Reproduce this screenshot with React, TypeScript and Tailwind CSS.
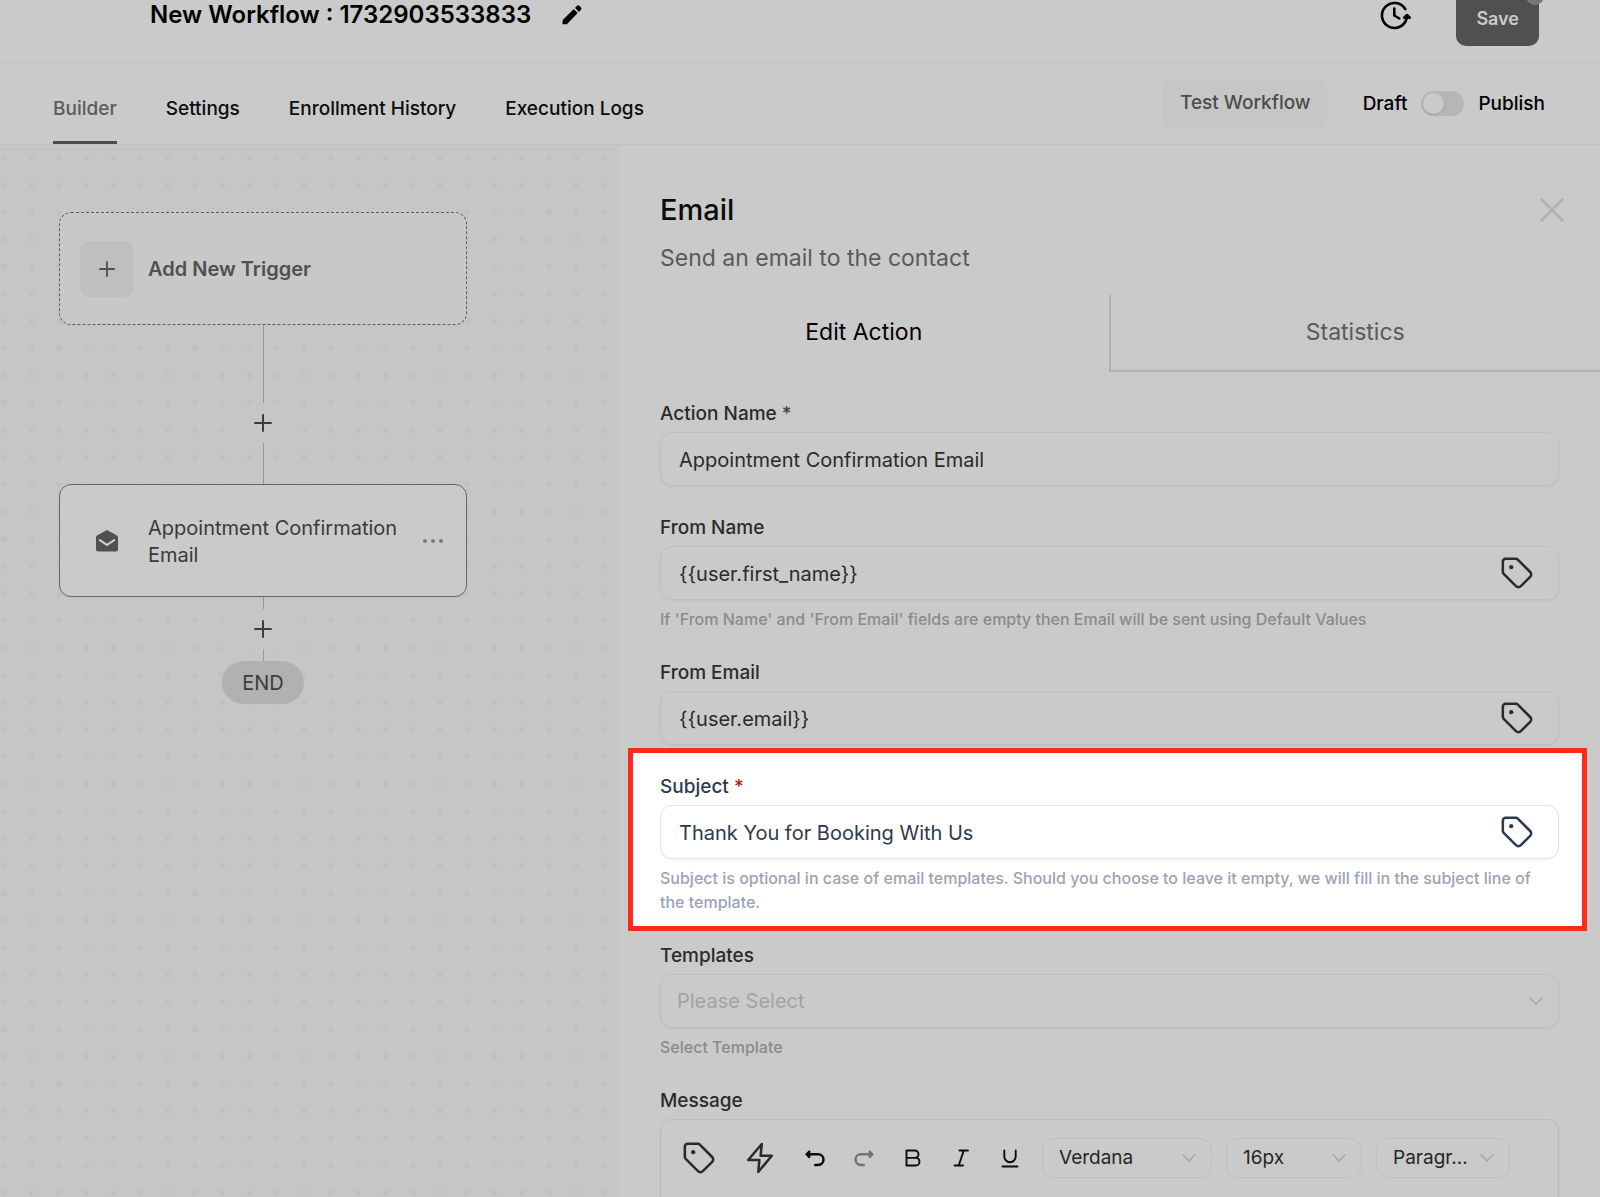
import type { ReactNode } from "react";

function TagIcon({ className = "" }: { className?: string }) {
  return (
    <svg viewBox="0 0 24 24" className={`size-[34px] ${className}`} fill="none" stroke="currentColor" strokeWidth="1.8" strokeLinejoin="round" aria-hidden="true">
      <path d="M12.586 2.586A2 2 0 0 0 11.172 2H4a2 2 0 0 0-2 2v7.172a2 2 0 0 0 .586 1.414l8.704 8.704a2.426 2.426 0 0 0 3.42 0l6.58-6.58a2.426 2.426 0 0 0 0-3.42z" />
      <circle cx="7.9" cy="7.9" r="1.5" fill="currentColor" stroke="none" />
    </svg>
  );
}

function Chevron({ className = "" }: { className?: string }) {
  return (
    <svg viewBox="0 0 14 8" className={`pointer-events-none h-2 w-3.5 text-[#a6a6a6] ${className}`} fill="none" stroke="currentColor" strokeWidth="1.4" strokeLinecap="round" aria-hidden="true">
      <path d="M1 0.8 7 7l6-6.2" />
    </svg>
  );
}

function PlusIcon({ className = "" }: { className?: string }) {
  return (
    <svg viewBox="0 0 18 18" className={className} fill="none" stroke="currentColor" strokeWidth="2" strokeLinecap="round" aria-hidden="true">
      <path d="M9 1v16M1 9h16" />
    </svg>
  );
}

function Field({ id, label, required, help, highlight, children }: { id: string; label: string; required?: boolean; help?: string; highlight?: boolean; children: ReactNode }) {
  return (
    <div className="relative">
      {highlight && <div className="absolute -top-6 -right-7 -bottom-[17px] -left-8 border-5 border-[#ff2a1c] bg-white" />}
      <div className="relative">
        <label htmlFor={id} className={`mb-[3px] block text-[19px] leading-[30px] font-medium ${highlight ? "text-[#2c3a52]" : "text-[#2b2b2b]"}`}>
          {label}
          {required && <span className={highlight ? "text-[#b91c1c]" : "text-[#444444]"}> *</span>}
        </label>
        {children}
        {help && <p className={`mt-[7px] text-base leading-6 font-medium ${highlight ? "text-[#9aa3b5]" : "text-[#8a8a8a]"}`}>{help}</p>}
      </div>
    </div>
  );
}

function TextField({ id, value, tag, highlight }: { id: string; value: string; tag?: boolean; highlight?: boolean }) {
  return (
    <div className={`flex h-[54px] items-center rounded-xl border pr-6 shadow-xs ${highlight ? "border-[#e3e4e8] bg-white text-[#2c3a52]" : "border-[#bfbfbf] text-[#2b2b2b]"}`}>
      <input id={id} type="text" defaultValue={value} className="h-full min-w-0 flex-1 bg-transparent pt-0.5 pl-[18px] text-xl outline-none" />
      {tag && (
        <button type="button" aria-label="Insert custom value">
          <TagIcon />
        </button>
      )}
    </div>
  );
}

function ToolSelect({ label, value, className }: { label: string; value: string; className: string }) {
  return (
    <div className={`relative flex h-10 items-center ${className}`}>
      <select aria-label={label} className="h-full w-full appearance-none rounded-xl border border-[#bfbfbf] bg-transparent pr-9 pl-4 text-[19px] text-[#262626]">
        <option>{value}</option>
      </select>
      <Chevron className="absolute right-4" />
    </div>
  );
}

function Connector({ className }: { className: string }) {
  return <div className={`w-px bg-[#979797] ${className}`} />;
}

function AddStep() {
  return (
    <button type="button" aria-label="Add step" className="flex h-10 w-20 items-center justify-center bg-[#c6c6c6] text-[#3c3c3c]">
      <PlusIcon className="size-[18px]" />
    </button>
  );
}

function TopBar() {
  return (
    <header className="-mt-[26px] flex h-[89px] shrink-0 items-center justify-between border-b border-[#c1c1c1] pr-[61px] pl-[150px]">
      <div className="flex items-center gap-[31px] pb-1.5">
        <h1 className="text-2xl font-semibold text-black">New Workflow : 1732903533833</h1>
        <button type="button" aria-label="Rename workflow" className="text-black">
          <svg viewBox="0 0 20 20" className="size-5" fill="currentColor" stroke="currentColor" strokeLinejoin="round" strokeWidth="1.2" aria-hidden="true">
            <path d="M1.200 15.400v3.300h3.400L14.800 8 11.700 5z" />
            <path d="m13.800 2.900 1.500-1.500a1.300 1.300 0 0 1 1.800 0l1.300 1.300a1.300 1.300 0 0 1 0 1.800l-1.500 1.500z" />
          </svg>
        </button>
      </div>
      <div className="flex items-center gap-[45px]">
        <button type="button" aria-label="Version history" className="pb-1 text-black">
          <svg viewBox="0 0 32 32" className="size-8" fill="none" stroke="currentColor" strokeWidth="2.600" strokeLinecap="round" strokeLinejoin="round" aria-hidden="true">
            <path d="M26.300 9.200A12.500 12.500 0 1 0 27.300 19.500" />
            <path d="M15.300 8.600v6.900l5 3" />
            <path d="M25.200 17.600h5.600L28 15z" fill="currentColor" />
          </svg>
        </button>
        <button type="button" className="relative h-14 rounded-[10px] bg-[#505050] px-5 pt-0.5 text-lg font-semibold text-[#cacaca]">
          Save
          <span className="absolute -top-[3px] -right-[5px] size-[18px] rounded-full bg-[#777777]" />
        </button>
      </div>
    </header>
  );
}

function TabBar() {
  return (
    <div className="flex h-[82px] shrink-0 items-center justify-between border-b border-[#c1c1c1] pr-[55px] pl-[53px]">
      <nav className="flex h-full gap-[49px] text-[19px] font-medium text-[#0c0c0c]">
        <a href="#builder" className="flex items-center border-b-3 border-[#4c4c4c] pt-3.5 text-[#5c5c5c]">Builder</a>
        <a href="#settings" className="flex items-center border-b-3 border-transparent pt-3.5">Settings</a>
        <a href="#enrollment" className="flex items-center border-b-3 border-transparent pt-3.5">Enrollment History</a>
        <a href="#logs" className="flex items-center border-b-3 border-transparent pt-3.5">Execution Logs</a>
      </nav>
      <div className="flex items-center">
        <button type="button" className="mr-[34px] h-[50px] rounded-xl bg-[#c6c6c6] px-[18px] text-[19px] font-medium text-[#4c4c4c]">Test Workflow</button>
        <label className="flex items-center gap-3.5 text-[19px] font-medium text-black">
          <span className="pt-0.5">Draft</span>
          <input type="checkbox" role="switch" aria-label="Publish workflow" className="peer sr-only" />
          <span className="flex h-[25px] w-[43px] items-center rounded-full bg-[#b6b6b6] px-0.5 peer-checked:justify-end">
            <span className="size-[21px] rounded-full bg-[#cacaca] shadow" />
          </span>
          <span className="pt-0.5">Publish</span>
        </label>
      </div>
    </div>
  );
}

function Canvas() {
  return (
    <section aria-label="Workflow canvas" className="relative w-[619px] shrink-0 bg-[#c6c6c6] pt-[67px] pl-[59px]">
      <svg className="absolute inset-0 size-full" aria-hidden="true">
        <defs>
          <pattern id="dots" x="-9.100" y="-0.600" width="27.220" height="27.220" patternUnits="userSpaceOnUse">
            <circle cx="13.600" cy="13.600" r="2.600" fill="#c0c0c0" />
          </pattern>
        </defs>
        <rect width="100%" height="100%" fill="url(#dots)" />
      </svg>
      <div className="relative flex w-[408px] flex-col items-center">
        <button type="button" className="flex h-[113px] w-full items-center rounded-xl border border-dashed border-[#5e5e5e] bg-[#c8c8c8] pl-5 text-left">
          <span className="mr-3.5 flex h-14 w-[54px] items-center justify-center rounded-[10px] bg-[#bfbfbf] text-[#505050]">
            <PlusIcon className="size-4" />
          </span>
          <span className="text-xl font-semibold text-[#505050]">Add New Trigger</span>
        </button>
        <Connector className="h-[78px]" />
        <AddStep />
        <Connector className="h-[41px]" />
        <div className="flex h-[113px] w-full items-center rounded-xl border border-[#666666] bg-[#cacaca] pr-[23px] pl-5 shadow-xs">
          <span className="mr-3.5 flex h-14 w-[54px] shrink-0 items-center justify-center rounded-[10px] bg-[#c9c9c9]">
            <svg viewBox="0 0 22 22" className="size-[22px]" aria-hidden="true">
              <path d="M11 0 21 5.600Q22 6.200 22 7.300V19.500A2 2 0 0 1 20 21.500H2A2 2 0 0 1 0 19.500V7.300Q0 6.200 1 5.600z" fill="#505050" />
              <path d="m3.800 10.100 7.200 4.900 7.200-4.900" fill="none" stroke="#cacaca" strokeWidth="2.200" strokeLinecap="round" />
            </svg>
          </span>
          <p className="flex-1 pt-0.5 text-xl leading-[27px] text-[#3a3a3a]">Appointment Confirmation Email</p>
          <button type="button" aria-label="Step options" className="flex gap-1">
            <span className="size-1 rounded-full bg-[#7c7c7c]" />
            <span className="size-1 rounded-full bg-[#7c7c7c]" />
            <span className="size-1 rounded-full bg-[#7c7c7c]" />
          </button>
        </div>
        <Connector className="h-3" />
        <AddStep />
        <Connector className="h-3" />
        <div className="flex h-[43px] w-[82px] items-center justify-center rounded-full bg-[#b1b1b1] text-xl text-[#3c3c3c]">END</div>
      </div>
    </section>
  );
}

function Toolbar() {
  return (
    <div className="flex items-center pt-[18px] pl-[21px] text-[#0c0c0c]">
      <button type="button" aria-label="Custom values" className="mr-[30px] text-[#2b2b2b]">
        <TagIcon />
      </button>
      <button type="button" aria-label="Trigger links" className="mr-[31px] text-[#2b2b2b]">
        <svg viewBox="0 0 28 34" className="h-[34px] w-7" fill="none" stroke="currentColor" strokeWidth="2.500" strokeLinejoin="round" aria-hidden="true">
          <path d="M15.800 3 2.200 19h11.200l-1.200 12L25.800 14.700H14.600z" />
        </svg>
      </button>
      <button type="button" aria-label="Undo" className="mr-[29px]">
        <svg viewBox="0 0 20 20" className="size-5" fill="none" stroke="currentColor" strokeWidth="2.500" strokeLinecap="round" strokeLinejoin="round" aria-hidden="true">
          <path d="M3 6.300h10.200a5.300 5.300 0 0 1 0 10.600H10.200" />
          <path d="M4.300 3.500v5.600L1.500 6.300z" fill="currentColor" strokeWidth="2.200" />
        </svg>
      </button>
      <button type="button" aria-label="Redo" className="mr-[30px] text-[#747474]">
        <svg viewBox="0 0 20 20" className="size-5" fill="none" stroke="currentColor" strokeWidth="2.500" strokeLinecap="round" strokeLinejoin="round" aria-hidden="true">
          <path d="M17 6.300H6.800a5.300 5.300 0 0 0 0 10.600H9.800" />
          <path d="M15.700 3.500v5.600l2.800-2.800z" fill="currentColor" strokeWidth="2.200" />
        </svg>
      </button>
      <button type="button" aria-label="Bold" className="mr-8">
        <svg viewBox="0 0 17 20" className="h-5 w-[17px]" fill="none" stroke="currentColor" strokeWidth="1.900" strokeLinejoin="round" aria-hidden="true">
          <path d="M2.500 2.500h8.300a3.700 3.700 0 0 1 0 7.400H2.500zM2.500 9.900h9.200a3.800 3.800 0 0 1 0 7.600H2.500z" />
        </svg>
      </button>
      <button type="button" aria-label="Italic" className="mr-8">
        <svg viewBox="0 0 16 20" className="h-5 w-4" fill="none" stroke="currentColor" strokeWidth="1.900" strokeLinecap="round" aria-hidden="true">
          <path d="M6.500 2.500H15M1.500 17.500H10M10.800 2.500 5.700 17.500" />
        </svg>
      </button>
      <button type="button" aria-label="Underline" className="mr-[23px]">
        <svg viewBox="0 0 18 20" className="h-5 w-[18px]" fill="none" stroke="currentColor" strokeWidth="1.900" strokeLinecap="round" aria-hidden="true">
          <path d="M3.300 2.500v6a5.700 5.700 0 0 0 11.400 0v-6M1.500 18.500h15" />
        </svg>
      </button>
      <div className="flex gap-3.5">
        <ToolSelect label="Font family" value="Verdana" className="w-[170px]" />
        <ToolSelect label="Font size" value="16px" className="w-[136px]" />
        <ToolSelect label="Block style" value="Paragr..." className="w-[134px]" />
      </div>
    </div>
  );
}

function EmailPanel() {
  return (
    <section aria-label="Email action" className="flex min-w-0 flex-1 flex-col">
      <div className="flex items-start justify-between pt-[45px] pr-[35px] pl-[41px]">
        <div>
          <h2 className="text-[29px] leading-10 font-medium text-[#0c0c0c]">Email</h2>
          <p className="mt-2.5 text-[23px] leading-9 text-[#5a5a5a]">Send an email to the contact</p>
        </div>
        <button type="button" aria-label="Close" className="mt-[7px] text-[#b1b1b1]">
          <svg viewBox="0 0 26 26" className="size-[26px]" fill="none" stroke="currentColor" strokeWidth="2.800" strokeLinecap="round" aria-hidden="true">
            <path d="m2.500 2.500 21 21M23.500 2.500l-21 21" />
          </svg>
        </button>
      </div>
      <div role="tablist" className="mt-[19px] flex h-[77px] shrink-0 text-[23px]">
        <button type="button" role="tab" aria-selected="true" className="flex-1 border-b-2 border-transparent text-black">Edit Action</button>
        <button type="button" role="tab" aria-selected="false" className="flex-1 border-b-2 border-l-2 border-[#b1b1b1] bg-[#c9c9c9] text-[#5a5a5a]">Statistics</button>
      </div>
      <form className="flex flex-1 flex-col gap-[27px] pt-[27px] pr-[41px] pl-[41px]">
        <Field id="action-name" label="Action Name" required>
          <TextField id="action-name" value="Appointment Confirmation Email" />
        </Field>
        <Field id="from-name" label="From Name" help="If 'From Name' and 'From Email' fields are empty then Email will be sent using Default Values">
          <TextField id="from-name" value="{{user.first_name}}" tag />
        </Field>
        <Field id="from-email" label="From Email">
          <TextField id="from-email" value="{{user.email}}" tag />
        </Field>
        <Field id="subject" label="Subject" required highlight help="Subject is optional in case of email templates. Should you choose to leave it empty, we will fill in the subject line of the template.">
          <TextField id="subject" value="Thank You for Booking With Us" tag highlight />
        </Field>
        <Field id="templates" label="Templates" help="Select Template">
          <div className="relative flex h-[54px] items-center">
            <select id="templates" className="h-full w-full appearance-none rounded-xl border border-[#bfbfbf] bg-transparent px-4 text-xl text-[#a3a3a3] shadow-xs">
              <option>Please Select</option>
            </select>
            <Chevron className="absolute right-4" />
          </div>
        </Field>
        <Field id="message" label="Message">
          <div className="rounded-xl border border-[#bababa]">
            <Toolbar />
            <textarea id="message" rows={8} className="mt-4 block w-full resize-none bg-transparent p-4 outline-none" />
          </div>
        </Field>
      </form>
    </section>
  );
}

export default function App() {
  return (
    <div className="flex h-screen flex-col overflow-hidden bg-[#cacaca] font-['Inter',sans-serif]">
      <TopBar />
      <TabBar />
      <main className="flex min-h-0 flex-1">
        <Canvas />
        <EmailPanel />
      </main>
    </div>
  );
}
